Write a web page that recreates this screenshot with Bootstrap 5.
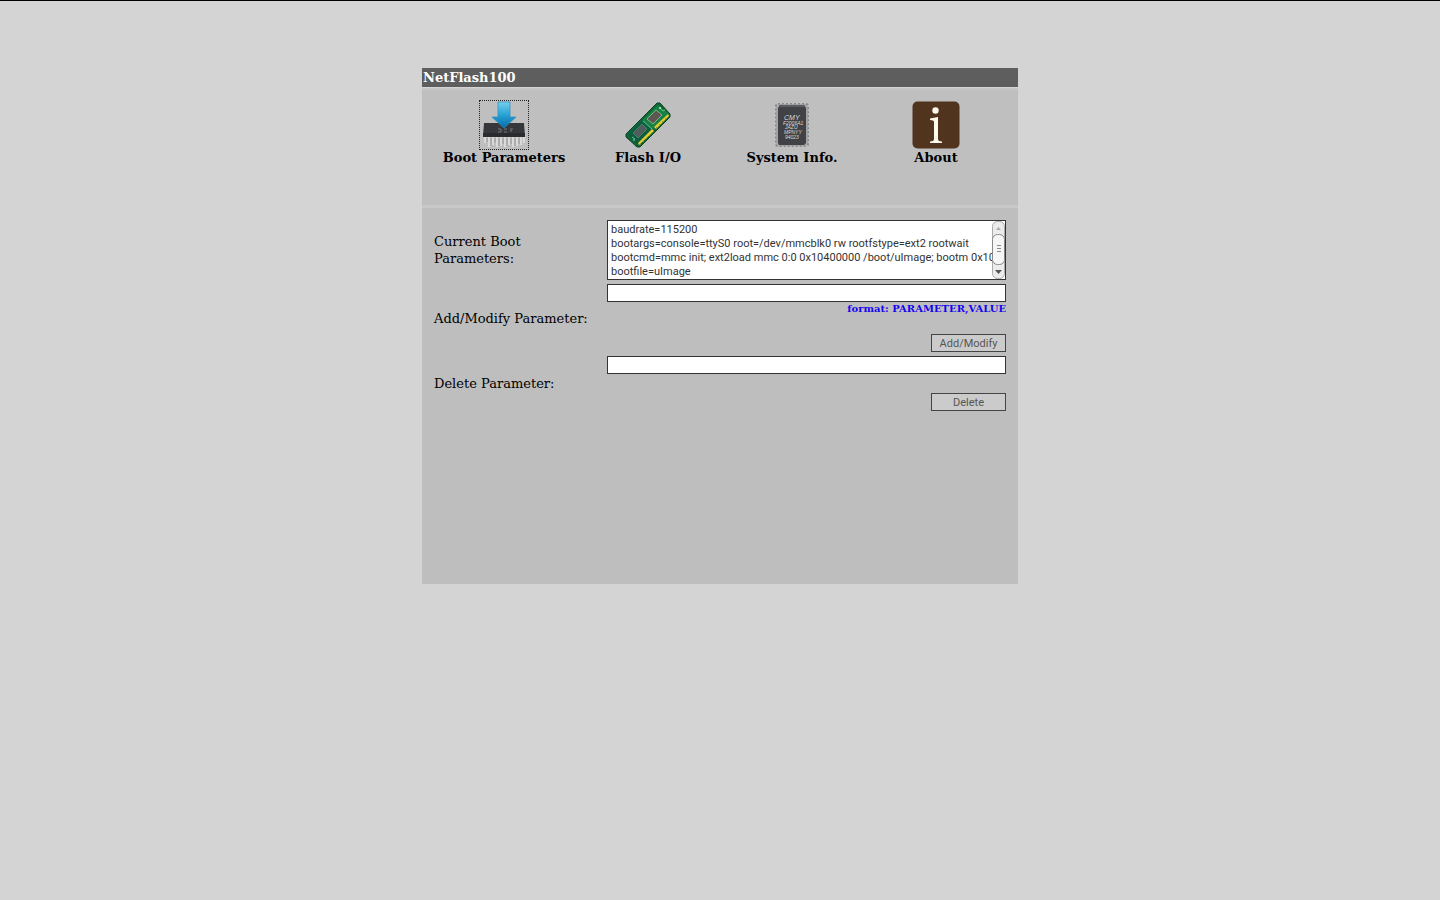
<!DOCTYPE html>
<html lang="en">
<head>
<meta charset="utf-8">
<meta name="viewport" content="width=device-width, initial-scale=1">
<title>NetFlash100</title>
<link href="https://cdn.jsdelivr.net/npm/bootstrap@5.3.0/dist/css/bootstrap.min.css" rel="stylesheet">
<style>
  body { background: #d4d4d4; color: #000; font: 13px/17px "DejaVu Serif", serif; border-top: 1px solid #000; }
  .panel { max-width: 596px; margin: 67px auto 0; }
  .panel-title { background: #5e5e5e; color: #fff; font-size: 13px; line-height: 17px; padding: 1px; margin: 0 0 1px; }
  .toolbar { background: #bfbfc0; min-height: 120px; padding: 10px 10px 0; border-bottom: 3px solid #c8c8c8; border-top: 2px solid #c6c6c6; }
  .tool { color: #000; text-decoration: none; line-height: 15px; }
  .tool-icon { width: 50px; height: 50px; border: 1px solid transparent; display: block; }
  .tool.active .tool-icon { border: 1px dotted #222; }
  .settings { background: #bfbebf; min-height: 376px; padding: 12px; }
  .setting { display: grid; grid-template-columns: 173px 1fr; align-items: center; margin-bottom: 4px; }
  .setting label { max-width: 160px; }
  .field, .action { font-family: Roboto, sans-serif; font-size: 11px; line-height: 14px; border: 1px solid #333; border-radius: 0; }
  .field { display: block; width: 100%; height: 18px; padding: 2px 3px 0; background: #fff; color: #333; }
  .field-area { height: 60px; resize: none; overflow: hidden; white-space: pre; }
  .action { width: 75px; height: 18px; padding: 2px 0 0; background: #cbcbcb; border-color: #444; color: #555; }
  .hint { color: #1505f0; font-size: 10px; line-height: 13px; margin-bottom: 19px; }
  .hint + .action, .field + .action { display: block; margin-left: auto; }
  .field + .action { margin-top: 19px; }
  .scroller { top: 1px; right: 1px; width: 13px; height: 58px; }
</style>
</head>
<body>
<main class="panel">
  <h1 class="panel-title fw-bold">NetFlash100</h1>
  <nav class="toolbar row g-0 fw-bold text-center align-items-start" aria-label="Sections">
    <a class="tool active col d-flex flex-column align-items-center" href="#boot">
      <svg class="tool-icon" viewBox="0 0 48 48" aria-hidden="true">
        <defs><linearGradient id="arrow" x2="0" y2="1"><stop stop-color="#75cfed"/><stop offset=".5" stop-color="#28a1d5"/><stop offset="1" stop-color="#076bab"/></linearGradient></defs>
        <path d="M4 22h40l1 13H3z" fill="#36373a"/><path d="M3 32h42v4H3z" fill="#2a2b2e"/>
        <path d="M5 36v6M9 36v10M13 36v8M17 36v10M21 36v9M25 36v10M29 36v8M33 36v10M37 36v9M41 36v8M44 36v6" stroke="#dadada" stroke-width="2"/>
        <path d="M7 37v4M11 37v8M15 37v5M19 37v8M23 37v6M27 37v8M31 37v6M35 37v8M39 37v6" stroke="#999"/>
        <path d="M18 28h3v3h-3M24 28h3M24 31h3M30 28h3M31 28v3" stroke="#74777b" fill="none"/>
        <path d="M18 1h12v15h6L24 27 12 16h6z" fill="url(#arrow)" stroke="#268fc0" stroke-width=".7"/>
      </svg>
      <span>Boot Parameters</span>
    </a>
    <a class="tool col d-flex flex-column align-items-center" href="#flash">
      <svg class="tool-icon" viewBox="0 0 48 48" aria-hidden="true">
        <path d="M2 33 33 2h3l10 11v3L16 46h-3L2 36z" fill="#126533" stroke="#0b4629"/>
        <path d="M3 34 34 4l11 9-31 31z" fill="#178044"/>
        <path d="M3 34 18 19l11 9-16 16z" fill="#0d5d40"/>
        <path d="M14 42 28 28l2 2-15 14zM30 26l14-13 1 2-13 13z" fill="#e4cb31"/>
        <path d="m16 43 1 1m2-4 1 1m2-4 1 1m2-4 1 1m6-9 1 1m2-4 1 1m2-4 1 1m2-4 1 1" stroke="#9a861b" stroke-width=".7"/>
        <path d="m9 32 9-9 5 5-9 9z" fill="#515c5b" stroke="#3e8565"/><path d="m23 18 9-9 6 5-9 9z" fill="#5f5653" stroke="#79b782"/>
        <path d="m19 20 9 8M36 7l3 3 2-1M8 36l3 2" stroke="#71c785" fill="none"/>
        <circle cx="36" cy="7" r="1" fill="#d6edc2"/><circle cx="10" cy="39" r="1" fill="#79ac91"/>
      </svg>
      <span>Flash I/O</span>
    </a>
    <a class="tool col d-flex flex-column align-items-center" href="#system">
      <svg class="tool-icon" viewBox="0 0 48 48" aria-hidden="true">
        <rect x="8" y="3" width="32" height="42" rx="2" fill="none" stroke="#88888a" stroke-width="2" stroke-dasharray="2 2"/>
        <path d="M11 3h27l2 3v36l-2 3H10l-2-3V6z" fill="#9d9da0" opacity=".8"/>
        <path d="M12 4h24l2 3v35l-2 2H11l-1-2V7z" fill="#414245"/><path d="m10 7 4-3h22l1 2H13z" fill="#5b5c5f"/>
        <g fill="#dadada" font-family="Liberation Sans, sans-serif" font-style="italic" font-weight="400"><text x="16" y="19" font-size="7">CMY</text><text x="15" y="24" font-size="5">F2006A1</text><text x="17" y="28" font-size="5">JAZU</text><text x="16" y="33" font-size="5">MPNYY</text><text x="17" y="38" font-size="5">94023</text></g>
      </svg>
      <span>System Info.</span>
    </a>
    <a class="tool col d-flex flex-column align-items-center" href="#about">
      <svg class="tool-icon" viewBox="0 0 48 48" aria-hidden="true">
        <rect x=".5" y=".5" width="47" height="47" rx="5" fill="#50341e"/>
        <circle cx="23.500" cy="9.500" r="3.200" fill="#fff8ed"/><path d="M18 17.500l8-1.500v22q0 2.500 4 2.500v1.500H18v-1.500q4 0 4-2.500V21q0-2-4-2z" fill="#fff8ed"/>
      </svg>
      <span>About</span>
    </a>
  </nav>
  <form class="settings" id="boot">
    <div class="setting">
      <label for="current">Current Boot Parameters:</label>
      <div class="position-relative">
        <textarea class="field field-area" id="current" wrap="off" readonly>baudrate=115200
bootargs=console=ttyS0 root=/dev/mmcblk0 rw rootfstype=ext2 rootwait
bootcmd=mmc init; ext2load mmc 0:0 0x10400000 /boot/uImage; bootm 0x10400000
bootfile=uImage</textarea>
        <svg class="scroller position-absolute" viewBox="0 0 13 58" aria-hidden="true">
          <path d="M0 0h13v58H0z" fill="#fff"/>
          <rect x=".5" y=".5" width="12" height="57" rx="5" fill="#ececec" stroke="#aaa"/>
          <rect x=".5" y="13.500" width="12" height="30" rx="5" fill="#f6f6f6" stroke="#888"/>
          <path d="M4 9h5L6.500 6z" fill="#aaa"/><path d="M3 49h7l-3.500 4z" fill="#555"/>
          <path d="M5 24.500h4M5 27.500h4M5 30.500h4" stroke="#888"/>
        </svg>
      </div>
    </div>
    <div class="setting">
      <label for="modify">Add/Modify Parameter:</label>
      <div class="text-end">
        <input class="field" id="modify" type="text">
        <div class="hint fw-bold">format: PARAMETER,VALUE</div>
        <button class="action" type="button">Add/Modify</button>
      </div>
    </div>
    <div class="setting">
      <label for="remove">Delete Parameter:</label>
      <div>
        <input class="field" id="remove" type="text">
        <button class="action" type="button">Delete</button>
      </div>
    </div>
  </form>
</main>
<script src="https://cdn.jsdelivr.net/npm/bootstrap@5.3.0/dist/js/bootstrap.bundle.min.js"></script>
</body>
</html>
